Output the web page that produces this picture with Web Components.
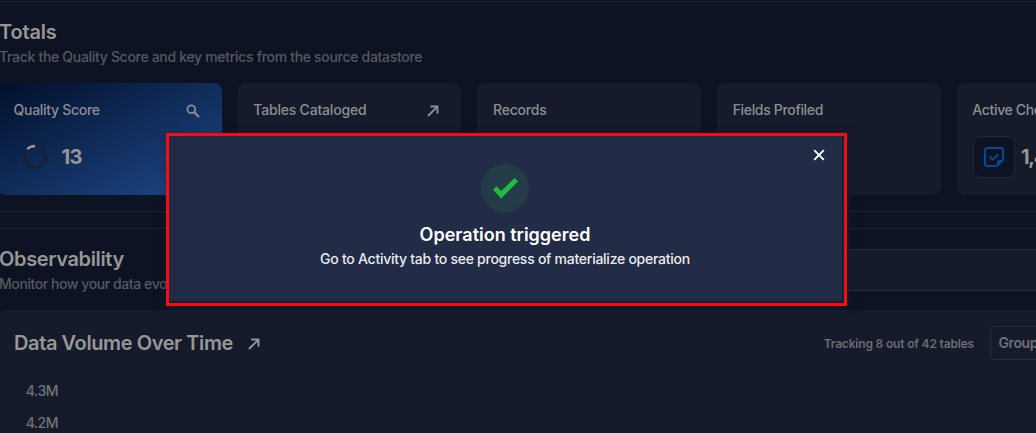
<!DOCTYPE html>
<html lang="en">
<head>
<meta charset="utf-8">
<title>Datastore overview</title>
<style>
html,body{margin:0;height:433px;overflow:hidden;background:#0d1323}
body{font-family:Inter,"Noto Sans",sans-serif;color:#979797}
</style>
</head>
<body>
<store-page>
  <page-section>
    <section-head heading="Totals" sub="Track the Quality Score and key metrics from the source datastore" style="--hs:-.2px;--ss:-.31px"></section-head>
    <card-row>
      <metric-card label="Quality Score" style="--bg:linear-gradient(153deg,#030f2b 0%,#0a2147 30%,#1a417c 85%,#1c4482 100%);--ls:-.3px">
        <glyph-icon name="search" slot="action"></glyph-icon>
        <score-ring></score-ring>
      </metric-card>
      <metric-card label="Tables Cataloged" style="--ls:-.2px"><glyph-icon name="arrow" slot="action"></glyph-icon></metric-card>
      <metric-card label="Records" style="--ls:-.2px"></metric-card>
      <metric-card label="Fields Profiled" style="--ls:-.33px"></metric-card>
      <metric-card label="Active Checks" style="--ls:-.35px"><check-count></check-count></metric-card>
    </card-row>
  </page-section>
  <page-section>
    <section-head heading="Observability" sub="Monitor how your data evolves over time" style="--hs:-.35px;--ss:-.42px"><filter-box></filter-box></section-head>
    <volume-panel></volume-panel>
  </page-section>
</store-page>
<operation-dialog>
  <span slot="title">Operation triggered</span>
  <span slot="text">Go to Activity tab to see progress of materialize operation</span>
</operation-dialog>
<script>
const define = (name, html) => {
  const t = document.createElement('template');
  t.innerHTML = html;
  customElements.define(name, class extends HTMLElement {
    connectedCallback() {
      if (this.shadowRoot) return;
      const root = this.attachShadow({mode: 'open'});
      root.append(t.content.cloneNode(true));
      root.querySelectorAll('[data-attr]').forEach(e => { e.textContent = this.getAttribute(e.dataset.attr) || ''; });
    }
  });
};

const icons = {
  search: '<svg width="14" height="14" viewBox="0 0 14 14" fill="none" stroke="currentColor"><circle cx="5.3" cy="5.3" r="3.9" stroke-width="1.8"/><path d="M8.2 8.2 13 13" stroke-width="2.2"/></svg>',
  arrow: '<svg width="12" height="12" viewBox="0 0 12 12" fill="none" stroke="currentColor" stroke-width="1.9"><path d="M1 11 10.4 1.6M3.3 1.5H10.5V8.7"/></svg>',
  close: '<svg width="12" height="12" viewBox="0 0 12 12" fill="none" stroke="currentColor" stroke-width="1.9"><path d="M1.2 1.2 10.8 10.8M10.8 1.2 1.2 10.8"/></svg>',
  check: '<svg width="25" height="21" viewBox="0 0 25 21"><path fill="#1fbc44" d="M0 11.8 3.4 8.3 8.2 13.1 21.6 0 25 3.6 8.2 20.4Z"/></svg>',
  note: '<svg width="22" height="22" viewBox="0 0 22 22"><path d="M4.2 2H17.8Q20 2 20 4.2V13.6L13.7 20H4.2Q2 20 2 17.8V4.2Q2 2 4.2 2Z" fill="none" stroke="#024a91" stroke-width="2"/><path d="M14 20.8V16.2Q14 14 16.2 14H20.8V14.3L14.3 20.8Z" fill="#024a91"/><path d="M6.7 10.7 9.8 13.7 15.2 8.2" fill="none" stroke="#024a91" stroke-width="2"/></svg>'
};
customElements.define('glyph-icon', class extends HTMLElement {
  connectedCallback() {
    if (this.shadowRoot) return;
    this.attachShadow({mode: 'open'}).innerHTML = '<style>:host{display:block;line-height:0}svg{display:block}</style>' + icons[this.getAttribute('name')];
  }
});

define('store-page', `<style>
:host{display:block;height:433px;overflow:hidden;padding-top:1px;box-sizing:border-box}
</style><slot></slot>`);

define('page-section', `<style>
:host{display:block;border-top:1px solid #1e2332;padding:16px 0 16px;margin:0 -200px 0 -2px}
:host(:first-of-type){border-bottom:1px solid #1e2332;margin-bottom:16px}
</style><slot></slot>`);

define('section-head', `<style>
:host{display:flex;height:50px;margin-bottom:15px;white-space:nowrap}
.t{flex:1;padding-left:1px}
h2{margin:0;font:600 20px/28px Inter;letter-spacing:var(--hs);color:#979797}
p{margin:0;font-size:14px;font-weight:500;line-height:22px;letter-spacing:var(--ss);color:#555960}
</style><div class="t"><h2 data-attr="heading"></h2><p data-attr="sub"></p></div><slot></slot>`);

define('card-row', `<style>
:host{display:grid;grid-template-columns:repeat(5,223.7px);gap:16px}
</style><slot></slot>`);

define('metric-card', `<style>
:host{display:block;box-sizing:border-box;height:112px;border-radius:8px;padding:15px 15.6px 16px;background:var(--bg,#151b2a)}
header{display:flex;justify-content:space-between;align-items:center;height:22px;margin-bottom:16px;padding-right:6.5px;white-space:nowrap;font-size:14px;font-weight:500;letter-spacing:var(--ls);color:#8e8e90}
header slot{display:block;padding-top:4px}
</style><header><span data-attr="label"></span><slot name="action"></slot></header><slot></slot>`);

define('score-ring', `<style>
:host{display:flex;align-items:center;gap:14px;height:42px;padding:0 0 0 8px;font-size:20px;font-weight:700;letter-spacing:-.8px;color:#979797}
b{font-weight:700}
</style><svg width="26" height="26" viewBox="0 0 26 26" fill="none" stroke-width="2.3"><circle cx="13" cy="13" r="11" stroke="#1b2130"/><path d="M5.1 5.3A11 11 0 0 1 13 2" stroke="#979797"/></svg><b>13</b>`);

define('check-count', `<style>
:host{display:flex;align-items:center;gap:6px;height:42px;padding-left:.6px;font-size:20px;font-weight:700;letter-spacing:-1.2px;color:#979797}
i{display:grid;place-items:center;box-sizing:border-box;width:42px;height:42px;border:1px solid #212635;border-radius:8px;background:#0d1323}
b{font-weight:700}
</style><i><glyph-icon name="note"></glyph-icon></i><b>1,463</b>`);

define('filter-box', `<style>
:host{display:block;box-sizing:border-box;width:620px;height:42px;margin-top:4px;border:1px solid #282d3a;border-radius:4px;background:#151b2a}
</style>`);

define('volume-panel', `<style>
:host{display:block;height:200px;padding:16px 16px 0 16px;border-radius:8px;background:#151b2a;white-space:nowrap}
header{display:flex;align-items:center;height:34px}
h3{margin:0 15px 0 0;font:600 20px/28px Inter;letter-spacing:-.4px;color:#979797}
.track{margin:0 16px 0 auto;font-size:12px;font-weight:600;letter-spacing:-.18px;color:#6a6c72}
.group{box-sizing:border-box;width:230px;height:34px;border:1px solid #282d3a;border-radius:4px;padding:0 7.5px;font-size:14px;font-weight:600;line-height:32px;letter-spacing:-.4px;color:#6f7175}
.chart{display:flex;padding-top:22px}
.axis{width:44px;text-align:right;font-size:14px;font-weight:500;line-height:18px;letter-spacing:-.5px;color:#717378}
.axis div{height:32px}
.grid{display:grid;grid-template-columns:repeat(5,216px);margin:10px 0 0 10px}
.grid i{height:80px;border-left:1px solid #111725}
glyph-icon{padding-top:2px}
</style><header><h3>Data Volume Over Time</h3><glyph-icon name="arrow"></glyph-icon><span class="track">Tracking 8 out of 42 tables</span><div class="group">Group by</div></header>
<div class="chart"><div class="axis"><div>4.3M</div><div>4.2M</div></div><div class="grid"><i></i><i></i><i></i><i></i><i></i></div></div>`);

define('operation-dialog', `<style>
:host{position:absolute;left:166px;top:133px;width:681px;height:173px;box-sizing:border-box;border:3px solid #fb0b0b;background:#132039;box-shadow:0 2px 9px #18203680;white-space:nowrap}
.box{display:flex;flex-direction:column;align-items:center;box-sizing:border-box;width:673px;height:165px;padding:28px 1px 0 0;border-radius:0 0 4px 4px;background:#222c46}
.ok{display:grid;place-items:center;width:48px;height:48px;border-radius:50%;background:#233c48}
.close{position:absolute;right:19px;top:13px;color:#fff}
.title{margin-top:10px;font-size:18px;line-height:26px;font-weight:600;letter-spacing:0;color:#fff}
.text{font-size:14px;font-weight:500;line-height:22px;letter-spacing:-.26px;color:#e9ebef}
</style><div class="box"><div class="ok"><glyph-icon name="check"></glyph-icon></div><div class="title"><slot name="title"></slot></div><div class="text"><slot name="text"></slot></div></div><glyph-icon class="close" name="close"></glyph-icon>`);
</script>
</body>
</html>
